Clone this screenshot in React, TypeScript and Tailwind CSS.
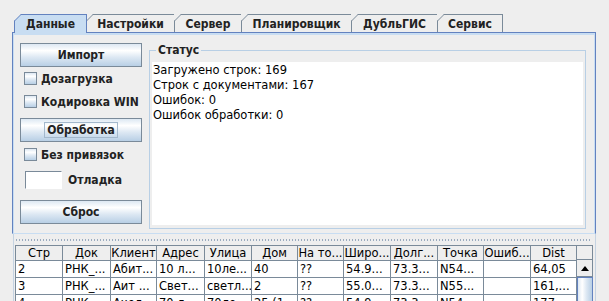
const tabs = [
  { label: "Данные", w: 73 },
  { label: "Настройки", w: 89 },
  { label: "Сервер", w: 68 },
  { label: "Планировщик", w: 111 },
  { label: "ДубльГИС", w: 87 },
  { label: "Сервис", w: 66 },
];

const statusLines = [
  "Загружено строк: 169",
  "Строк с документами: 167",
  "Ошибок: 0",
  "Ошибок обработки: 0",
];

const colWidths = [47, 48, 46, 48, 47, 46, 46, 47, 47, 46, 47, 46];
const headers = ["Стр", "Док", "Клиент", "Адрес", "Улица", "Дом", "На то...", "Широ...", "Долг...", "Точка", "Ошиб...", "Dist"];
const rows = [
  ["2", "РНК_...", "Абит...", "10 л...", "10ле...", "40", "??", "54.9...", "73.3...", "N54...", "", "64,05"],
  ["3", "РНК_...", "Аит ...", "Свет...", "светл...", "2", "??", "55.0...", "73.3...", "N55...", "", "161,..."],
  ["4", "РНК_...", "Ахел...", "70 л...", "70ле...", "25 (1...", "??", "54.9...", "73.3...", "N54...", "", "177..."],
];

const metalGrad =
  "bg-[linear-gradient(to_bottom,#dde8f3_0%,#ffffff_30%,#ffffff_30%,#dde8f3_60%,#b8cfe5_100%)]";

// bold Swing labels are narrower than browser DejaVu Sans Bold
const boldFont = "font-['DejaVu_Sans_Condensed','DejaVu_Sans',sans-serif] font-stretch-condensed text-[12px] font-bold text-[#222]";

function Tab({ label, w, first, selected }: { label: string; w: number; first: boolean; selected: boolean }) {
  return (
    <div
      className={`relative flex items-center justify-center border-l border-r border-t ${boldFont} ${
        first ? "" : "-ml-px"
      } ${selected ? "z-10 h-[19px] border-[#6382bf] bg-[#c8ddf2] pb-px" : "h-[18px] border-[#7a8a99] bg-[#eeeeee]"}`}
      style={{ width: w }}
    >
      <svg className="absolute left-[-1px] top-[-1px]" width="7" height="7" viewBox="0 0 7 7">
        <polygon points="0,0 7,0 0,7" fill="#eeeeee" />
        <line x1="0.5" y1="7" x2="7" y2="0.5" stroke={selected ? "#6382bf" : "#7a8a99"} strokeWidth="1" />
      </svg>
      {label}
    </div>
  );
}

function MetalButton({ label, focused }: { label: string; focused?: boolean }) {
  return (
    <div className={`flex h-[24px] w-full items-center justify-center border border-[#7a8a99] ${metalGrad}`}>
      <span
        className={`px-[2px] leading-[14px] ${boldFont} ${
          focused ? "border border-[#a3b8cc]" : "border border-transparent"
        }`}
      >
        {label}
      </span>
    </div>
  );
}

function Check({ label, h }: { label: string; h: number }) {
  return (
    <div className="flex items-center pl-[4px]" style={{ height: h }}>
      <div className={`h-[13px] w-[13px] border border-[#7a8a99] ${metalGrad}`} />
      <span className={`ml-[4px] whitespace-nowrap ${boldFont}`}>{label}</span>
    </div>
  );
}

export default function App() {
  return (
    <div className="relative h-[301px] w-[609px] overflow-hidden bg-[#eeeeee] font-['DejaVu_Sans',sans-serif]">
      {/* tabs */}
      <div className="relative z-10 flex h-[32px] items-start pl-[14px] pt-[14px]">
        {tabs.map((t, i) => (
          <Tab key={t.label} label={t.label} w={t.w} first={i === 0} selected={i === 0} />
        ))}
      </div>

      {/* tab content */}
      <div className="ml-[12px] h-[202px] w-[584px] border border-[#6382bf] border-b-[#c8ddf2]">
        <div className="flex h-full border-l border-r border-t-2 border-[#c8ddf2] pl-[6px] pr-[8px] pt-[8px]">
          <div className="flex w-[122px] flex-col">
            <MetalButton label="Импорт" />
            <Check label="Дозагрузка" h={23} />
            <Check label="Кодировка WIN" h={23} />
            <div className="mt-[5px]">
              <MetalButton label="Обработка" focused />
            </div>
            <Check label="Без привязок" h={25} />
            <div className="flex h-[26px] items-center pl-[5px]">
              <div className="h-[18px] w-[37px] border border-[#7a8a99] border-b-white border-r-white bg-white" />
              <span className={`ml-[6px] ${boldFont}`}>Отладка</span>
            </div>
            <div className="mt-[7px]">
              <MetalButton label="Сброс" />
            </div>
          </div>

          <fieldset className="ml-[7px] h-[186px] flex-1 border border-[#b8cfe5] px-[2px]">
            <legend className={`ml-[4px] px-[2px] leading-[14px] ${boldFont}`}>Статус</legend>
            <div className="mt-[5px] h-[163px] bg-white pl-[1px] pt-px text-[11.5px] leading-[15px] text-black">
              {statusLines.map((l) => (
                <div key={l}>{l}</div>
              ))}
            </div>
          </fieldset>
        </div>
      </div>

      {/* split divider + table */}
      <div className="ml-[13px] h-[67px] w-[583px] border-l border-r border-[#c5d3e2] pl-px">
        <div className="h-[11px] pt-[5px]">
          <div className="ml-px h-[2px] w-[576px] bg-[repeating-linear-gradient(90deg,#9aabbf_0_1px,transparent_1px_3px)]" />
        </div>
        <div className="flex">
          <div className="border-l border-t border-[#7a8a99] text-[11.5px] text-black">
            <div className="flex h-[15px]">
              {headers.map((h, i) => (
                <div
                  key={h}
                  className="flex items-center justify-center overflow-hidden whitespace-nowrap border-b border-r border-[#7a8a99] bg-[#eeeeee] leading-[14px]"
                  style={{ width: colWidths[i] }}
                >
                  {h}
                </div>
              ))}
            </div>
            {rows.map((r) => (
              <div key={r[0]} className="flex h-[17px]">
                {r.map((c, i) => (
                  <div
                    key={i}
                    className="flex items-center overflow-hidden whitespace-nowrap border-b border-r border-[#7a8a99] bg-white pl-[2px] leading-[16px]"
                    style={{ width: colWidths[i] }}
                  >
                    {c}
                  </div>
                ))}
              </div>
            ))}
          </div>
          {/* scrollbar */}
          <div className="flex w-[16px] flex-col">
            <div className="h-[15px] border-b border-r border-t border-[#7a8a99] bg-[#eeeeee]" />
            <div className="flex h-[17px] items-center justify-center border-b border-r border-[#7a8a99] bg-[#eeeeee]">
              <svg width="8" height="5" viewBox="0 0 8 5">
                <polygon points="4,0 8,5 0,5" fill="#000" />
              </svg>
            </div>
            <div className="h-[30px] border-l border-r border-t border-[#6382bf] bg-[linear-gradient(to_right,#dde8f3_0%,#ffffff_30%,#dde8f3_60%,#b8cfe5_100%)]" />
          </div>
        </div>
      </div>
    </div>
  );
}
